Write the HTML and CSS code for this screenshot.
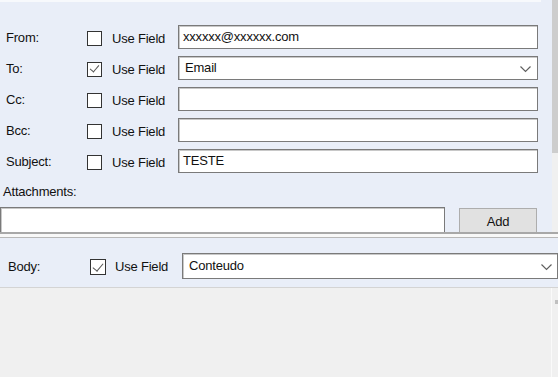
FILE: index.html
```html
<!DOCTYPE html>
<html lang="en">
<head>
    <meta charset="UTF-8">
    <title>Email Settings</title>
    <link rel="stylesheet" href="styles.css">
</head>
<body>
    <div class="window">
        <div class="top-panel">
            <div class="top-content">
                <div class="strip"></div>
                <div class="fields">
                    <span class="label">From:</span>
                    <label class="use"><span class="box"></span>Use Field</label>
                    <div class="input">xxxxxx@xxxxxx.com</div>

                    <span class="label">To:</span>
                    <label class="use"><span class="box checked"></span>Use Field</label>
                    <div class="input select">Email<svg class="chev" width="11" height="7" viewBox="0 0 11 7"><polyline points="0.5,0.5 5.5,5.5 10.5,0.5" fill="none" stroke="#606060" stroke-width="1.2"/></svg></div>

                    <span class="label">Cc:</span>
                    <label class="use"><span class="box"></span>Use Field</label>
                    <div class="input"></div>

                    <span class="label">Bcc:</span>
                    <label class="use"><span class="box"></span>Use Field</label>
                    <div class="input"></div>

                    <span class="label">Subject:</span>
                    <label class="use"><span class="box"></span>Use Field</label>
                    <div class="input">TESTE</div>
                </div>
                <div class="attach-label">Attachments:</div>
                <div class="attach-row">
                    <div class="input attach-input"></div>
                    <div class="btn">Add</div>
                </div>
            </div>
            <div class="vscroll"><div class="thumb"></div></div>
        </div>

        <div class="splitter"></div>

        <div class="body-row">
            <span class="label body-label">Body:</span>
            <label class="use body-use"><span class="box big checked"></span>Use Field</label>
            <div class="input select body-select">Conteudo<svg class="chev" width="11" height="7" viewBox="0 0 11 7"><polyline points="0.5,0.5 5.5,5.5 10.5,0.5" fill="none" stroke="#606060" stroke-width="1.2"/></svg></div>
        </div>

        <div class="editor">
            <div class="editor-area"></div>
            <div class="editor-scroll"><span class="arrow"></span></div>
        </div>
    </div>
</body>
</html>
```

FILE: styles.css
```css
body {
    margin: 0;
    padding: 0;
    font-family: "Liberation Sans", Arial, sans-serif;
    font-size: 13px;
    letter-spacing: -0.2px;
    color: #111;
    background: #f0f0f0;
}

.window {
    width: 558px;
    height: 377px;
    overflow: hidden;
    display: flex;
    flex-direction: column;
}

.top-panel {
    height: 232px;
    flex: none;
    display: flex;
    overflow: hidden;
    background: #e9eef8;
}

.top-content {
    width: 552px;
}

.strip {
    width: 541px;
    height: 2px;
    background: #f7f9fc;
}

.fields {
    display: grid;
    grid-template-columns: 81px 91px 360px;
    grid-auto-rows: 24px;
    row-gap: 7px;
    align-items: center;
    padding: 23px 0 0 6px;
}

.label {
    line-height: 16px;
    padding-top: 2px;
}

.use {
    display: flex;
    align-items: center;
    gap: 10px;
    white-space: nowrap;
    padding-top: 2px;
}

.box {
    width: 13px;
    height: 13px;
    border: 1px solid #333;
    background: #fff;
    position: relative;
}

.box.big {
    width: 14px;
    height: 14px;
}

.box.checked::after {
    content: "";
    position: absolute;
    left: 4px;
    top: 0px;
    width: 4px;
    height: 8px;
    border: solid #555;
    border-width: 0 1px 1px 0;
    transform: rotate(40deg);
}

.box.big.checked::after {
    left: 4px;
    top: 1px;
    width: 5px;
    height: 9px;
}

.input {
    height: 24px;
    box-sizing: border-box;
    border: 1px solid #7a7a7a;
    box-shadow: inset 1px 1px 0 #c8c8c8;
    background: #fff;
    padding: 0 4px;
    line-height: 22px;
    white-space: nowrap;
    position: relative;
}

.select {
    padding-left: 6px;
}

.chev {
    position: absolute;
    right: 6px;
    top: 9px;
}

.attach-label {
    margin: 11px 0 0 3px;
    line-height: 16px;
}

.attach-row {
    display: flex;
    align-items: flex-start;
    margin-top: 7px;
}

.attach-input {
    width: 445px;
    height: 28px;
}

.btn {
    margin: 1px 0 0 14px;
    width: 78px;
    height: 26px;
    box-sizing: border-box;
    border: 1px solid #adadad;
    background: #e1e1e1;
    text-align: center;
    line-height: 26px;
}

.vscroll {
    width: 6px;
    background: #f0f0f0;
}

.thumb {
    height: 153px;
    background: #cdcdcd;
}

.splitter {
    height: 6px;
    flex: none;
    box-sizing: border-box;
    border-top: 2px solid #a8a8a8;
    border-bottom: 1px solid #b8b8b8;
    background: #f8f8f8;
}

.body-row {
    height: 49px;
    flex: none;
    box-sizing: border-box;
    display: flex;
    align-items: center;
    padding: 6px 0 0 8px;
    background: #e9eef8;
}

.body-label {
    width: 82px;
}

.body-use {
    width: 92px;
    gap: 9px;
}

.body-select {
    width: 376px;
    height: 26px;
    line-height: 24px;
}

.body-select .chev {
    right: 5px;
    top: 10px;
}

.editor {
    flex: 1;
    display: flex;
    border-top: 1px solid #d4d4d4;
    background: #f0f0f0;
}

.editor-area {
    width: 551px;
    border-right: 1px solid #fafafa;
}

.editor-scroll {
    flex: 1;
    position: relative;
}

.arrow {
    position: absolute;
    left: 3px;
    top: 12px;
    width: 3px;
    height: 4px;
    background: #c0c0c0;
}
```
